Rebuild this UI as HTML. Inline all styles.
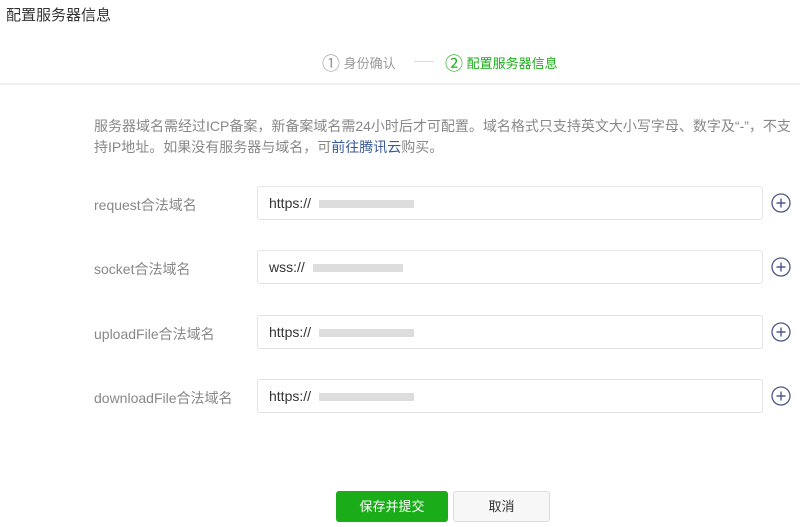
<!DOCTYPE html>
<html><head><meta charset="utf-8"><style>
*{margin:0;padding:0;box-sizing:border-box}
body{width:800px;height:527px;background:#fff;font-family:"Liberation Sans","Noto Sans CJK SC",sans-serif;position:relative;overflow:hidden;color:#333}
.a{position:absolute;white-space:nowrap}
.title{left:6px;top:4px;font-size:15px;color:#333}
.steps{top:50px;font-size:13px;color:#999}
.num{font-size:18px;vertical-align:-2px}
.hr{left:0;top:83px;width:800px;height:2px;background:#eee}
.desc{left:94px;top:116px;font-size:14px;line-height:21px;color:#888}
.lbl{left:94px;font-size:14px;color:#888}
.inp{left:257px;width:506px;height:34px;border:1px solid #e4e4e4;border-radius:3px;font-size:14px;color:#333;padding:8px 0 0 11px}
.blur{display:inline-block;height:8px;background:#ddd;vertical-align:middle;margin-left:4px}
.plus{left:771px;width:20px;height:20px}
.btn{top:491px;height:31px;border-radius:3px;font-size:13px;text-align:center;line-height:31px}
</style></head><body>
<div class="a title">配置服务器信息</div>
<div class="a steps" style="left:322px"><span class="num">①</span> 身份确认</div>
<div class="a" style="left:414px;top:61px;width:20px;height:1px;background:#ddd"></div>
<div class="a steps" style="left:445px;color:#1aad19"><span class="num">②</span> 配置服务器信息</div>
<div class="a hr"></div>
<div class="a desc">服务器域名需经过ICP备案，新备案域名需24小时后才可配置。域名格式只支持英文大小写字母、数字及“-”，不支<br>持IP地址。如果没有服务器与域名，可<span style="color:#3a5a9a">前往腾讯云</span>购买。</div>

<div class="a lbl" style="top:195px">request合法域名</div>
<div class="a inp" style="top:186px">https:// <span class="blur" style="width:95px"></span></div>
<svg class="a plus" style="top:193px" viewBox="0 0 20 20"><circle cx="10" cy="10" r="9" fill="none" stroke="#4a5a8a" stroke-width="1.3"/><path d="M10 5.5v9M5.5 10h9" stroke="#4a5a8a" stroke-width="1.4"/></svg>

<div class="a lbl" style="top:259px">socket合法域名</div>
<div class="a inp" style="top:250px">wss:// <span class="blur" style="width:90px"></span></div>
<svg class="a plus" style="top:257px" viewBox="0 0 20 20"><circle cx="10" cy="10" r="9" fill="none" stroke="#4a5a8a" stroke-width="1.3"/><path d="M10 5.5v9M5.5 10h9" stroke="#4a5a8a" stroke-width="1.4"/></svg>

<div class="a lbl" style="top:324px">uploadFile合法域名</div>
<div class="a inp" style="top:315px">https:// <span class="blur" style="width:95px"></span></div>
<svg class="a plus" style="top:322px" viewBox="0 0 20 20"><circle cx="10" cy="10" r="9" fill="none" stroke="#4a5a8a" stroke-width="1.3"/><path d="M10 5.5v9M5.5 10h9" stroke="#4a5a8a" stroke-width="1.4"/></svg>

<div class="a lbl" style="top:388px">downloadFile合法域名</div>
<div class="a inp" style="top:379px">https:// <span class="blur" style="width:95px"></span></div>
<svg class="a plus" style="top:386px" viewBox="0 0 20 20"><circle cx="10" cy="10" r="9" fill="none" stroke="#4a5a8a" stroke-width="1.3"/><path d="M10 5.5v9M5.5 10h9" stroke="#4a5a8a" stroke-width="1.4"/></svg>

<div class="a btn" style="left:336px;width:112px;background:#1aad19;color:#fff">保存并提交</div>
<div class="a btn" style="left:453px;width:97px;background:#f7f7f7;border:1px solid #ddd;color:#333;line-height:29px">取消</div>
</body></html>
